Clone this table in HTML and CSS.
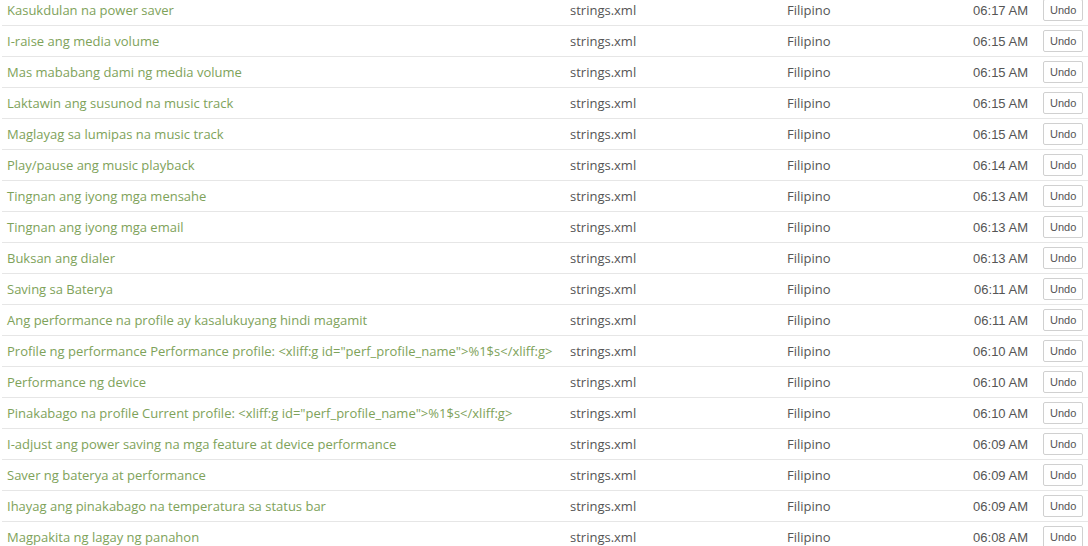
FILE: index.html
```html
<!DOCTYPE html>
<html>
<head>
<meta charset="utf-8">
<link rel="stylesheet" href="styles.css">
</head>
<body>
<div class="list">
  <div class="row"><div class="c src">Kasukdulan na power saver</div><div class="c file">strings.xml</div><div class="c lang">Filipino</div><div class="c time">06:17 AM</div><div class="c act"><button class="undo">Undo</button></div></div>
  <div class="row"><div class="c src">I-raise ang media volume</div><div class="c file">strings.xml</div><div class="c lang">Filipino</div><div class="c time">06:15 AM</div><div class="c act"><button class="undo">Undo</button></div></div>
  <div class="row"><div class="c src">Mas mababang dami ng media volume</div><div class="c file">strings.xml</div><div class="c lang">Filipino</div><div class="c time">06:15 AM</div><div class="c act"><button class="undo">Undo</button></div></div>
  <div class="row"><div class="c src">Laktawin ang susunod na music track</div><div class="c file">strings.xml</div><div class="c lang">Filipino</div><div class="c time">06:15 AM</div><div class="c act"><button class="undo">Undo</button></div></div>
  <div class="row"><div class="c src">Maglayag sa lumipas na music track</div><div class="c file">strings.xml</div><div class="c lang">Filipino</div><div class="c time">06:15 AM</div><div class="c act"><button class="undo">Undo</button></div></div>
  <div class="row"><div class="c src">Play/pause ang music playback</div><div class="c file">strings.xml</div><div class="c lang">Filipino</div><div class="c time">06:14 AM</div><div class="c act"><button class="undo">Undo</button></div></div>
  <div class="row"><div class="c src">Tingnan ang iyong mga mensahe</div><div class="c file">strings.xml</div><div class="c lang">Filipino</div><div class="c time">06:13 AM</div><div class="c act"><button class="undo">Undo</button></div></div>
  <div class="row"><div class="c src">Tingnan ang iyong mga email</div><div class="c file">strings.xml</div><div class="c lang">Filipino</div><div class="c time">06:13 AM</div><div class="c act"><button class="undo">Undo</button></div></div>
  <div class="row"><div class="c src">Buksan ang dialer</div><div class="c file">strings.xml</div><div class="c lang">Filipino</div><div class="c time">06:13 AM</div><div class="c act"><button class="undo">Undo</button></div></div>
  <div class="row"><div class="c src">Saving sa Baterya</div><div class="c file">strings.xml</div><div class="c lang">Filipino</div><div class="c time">06:11 AM</div><div class="c act"><button class="undo">Undo</button></div></div>
  <div class="row"><div class="c src">Ang performance na profile ay kasalukuyang hindi magamit</div><div class="c file">strings.xml</div><div class="c lang">Filipino</div><div class="c time">06:11 AM</div><div class="c act"><button class="undo">Undo</button></div></div>
  <div class="row"><div class="c src">Profile ng performance Performance profile: &lt;xliff:g id="perf_profile_name"&gt;%1$s&lt;/xliff:g&gt;</div><div class="c file">strings.xml</div><div class="c lang">Filipino</div><div class="c time">06:10 AM</div><div class="c act"><button class="undo">Undo</button></div></div>
  <div class="row"><div class="c src">Performance ng device</div><div class="c file">strings.xml</div><div class="c lang">Filipino</div><div class="c time">06:10 AM</div><div class="c act"><button class="undo">Undo</button></div></div>
  <div class="row"><div class="c src">Pinakabago na profile Current profile: &lt;xliff:g id="perf_profile_name"&gt;%1$s&lt;/xliff:g&gt;</div><div class="c file">strings.xml</div><div class="c lang">Filipino</div><div class="c time">06:10 AM</div><div class="c act"><button class="undo">Undo</button></div></div>
  <div class="row"><div class="c src">I-adjust ang power saving na mga feature at device performance</div><div class="c file">strings.xml</div><div class="c lang">Filipino</div><div class="c time">06:09 AM</div><div class="c act"><button class="undo">Undo</button></div></div>
  <div class="row"><div class="c src">Saver ng baterya at performance</div><div class="c file">strings.xml</div><div class="c lang">Filipino</div><div class="c time">06:09 AM</div><div class="c act"><button class="undo">Undo</button></div></div>
  <div class="row"><div class="c src">Ihayag ang pinakabago na temperatura sa status bar</div><div class="c file">strings.xml</div><div class="c lang">Filipino</div><div class="c time">06:09 AM</div><div class="c act"><button class="undo">Undo</button></div></div>
  <div class="row"><div class="c src">Magpakita ng lagay ng panahon</div><div class="c file">strings.xml</div><div class="c lang">Filipino</div><div class="c time">06:08 AM</div><div class="c act"><button class="undo">Undo</button></div></div>
</div>
</body>
</html>
```

FILE: styles.css
```css
html, body {
  margin: 0;
  padding: 0;
  background: #fff;
  overflow: hidden;
}
.list {
  margin: -6px 0 0 2px;
  width: 1086px;
  font-family: "Open Sans", sans-serif;
  font-size: 13px;
}
.row {
  display: grid;
  grid-template-columns: 563px 217px 150px 106px 50px;
  height: 30px;
  border-top: 1px solid #e6e6e6;
  align-items: center;
}
.c {
  padding-left: 5px;
  white-space: nowrap;
  overflow: hidden;
  line-height: 18px;
}
.src { color: #7ea25a; }
.file, .lang { color: #555; }
.time {
  font-family: "Liberation Sans", Arial, sans-serif;
  color: #555;
  text-align: right;
  padding-left: 0;
  padding-right: 10px;
  padding-top: 2px;
}
.act { display: flex; }
.undo {
  font-family: "Liberation Sans", Arial, sans-serif;
  font-size: 11px;
  font-weight: normal;
  color: #555;
  background: #fff;
  border: 1px solid #d0d0d0;
  border-radius: 2px;
  height: 22px;
  padding: 0 6px;
  line-height: 20px;
  margin: 0;
}
```
